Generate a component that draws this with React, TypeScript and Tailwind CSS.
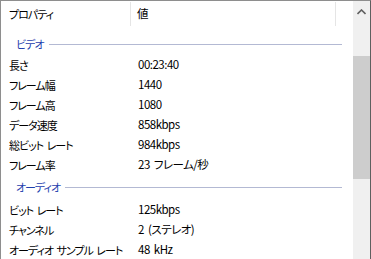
const video: [string, string][] = [
  ["長さ", "00:23:40"],
  ["フレーム幅", "1440"],
  ["フレーム高", "1080"],
  ["データ速度", "858kbps"],
  ["総ビット レート", "984kbps"],
  ["フレーム率", "23 フレーム/秒"],
];

const audio: [string, string][] = [
  ["ビット レート", "125kbps"],
  ["チャンネル", "2 (ステレオ)"],
  ["オーディオ サンプル レート", "48 kHz"],
];

const kana = "text-[11px] tracking-[-1px] [word-spacing:2px]";

function Group({ title }: { title: string }) {
  return (
    <div className="flex h-full items-center pl-[15px] pr-[11px]">
      <span className={`text-[#1f3fae] ${kana}`}>{title}</span>
      <div className="ml-[5px] h-px flex-1 bg-[#b3b9d3]" />
    </div>
  );
}

function Row({ label, value }: { label: string; value: string }) {
  return (
    <div className="flex h-[20px] items-center">
      <div className={`w-[137px] shrink-0 pl-[8px] whitespace-nowrap ${kana}`}>{label}</div>
      <div className="whitespace-nowrap [word-spacing:2px]">{value}</div>
    </div>
  );
}

export default function App() {
  return (
    <div
      className="flex h-[259px] w-[371px] border-l border-t border-r border-[#8e8e8e] border-r-[#5f5f5f] bg-white text-[11.5px] leading-none tracking-[-0.5px] text-black [font-feature-settings:'palt']"
      style={{ fontFamily: '"Noto Sans CJK JP", "Noto Sans", sans-serif' }}
    >
      <div className="flex-1">
        {/* column header */}
        <div className="flex h-[26px]">
          <div className={`my-[1px] flex w-[130px] items-center border-r border-[#e5e5e5] pl-[8px] ${kana}`}>
            プロパティ
          </div>
          <div className="my-[1px] flex w-[205px] items-center border-r border-[#e5e5e5] pl-[6px]">
            値
          </div>
        </div>
        <div className="mt-[6px] h-[22px]">
          <Group title="ビデオ" />
        </div>
        {video.map(([l, v]) => (
          <Row key={l} label={l} value={v} />
        ))}
        <div className="h-[25px]">
          <Group title="オーディオ" />
        </div>
        {audio.map(([l, v]) => (
          <Row key={l} label={l} value={v} />
        ))}
      </div>
      {/* scrollbar */}
      <div className="flex w-[17px] flex-col bg-[#f0f0f0]">
        <div className="flex h-[17px] items-center justify-center pt-[4px]">
          <svg width="9" height="6" viewBox="0 0 9 6">
            <path d="M0.5 5 L4.5 1 L8.5 5" fill="none" stroke="#606060" strokeWidth="1.6" />
          </svg>
        </div>
        <div className="mt-[38px] h-[123px] bg-[#cdcdcd]" />
      </div>
    </div>
  );
}
